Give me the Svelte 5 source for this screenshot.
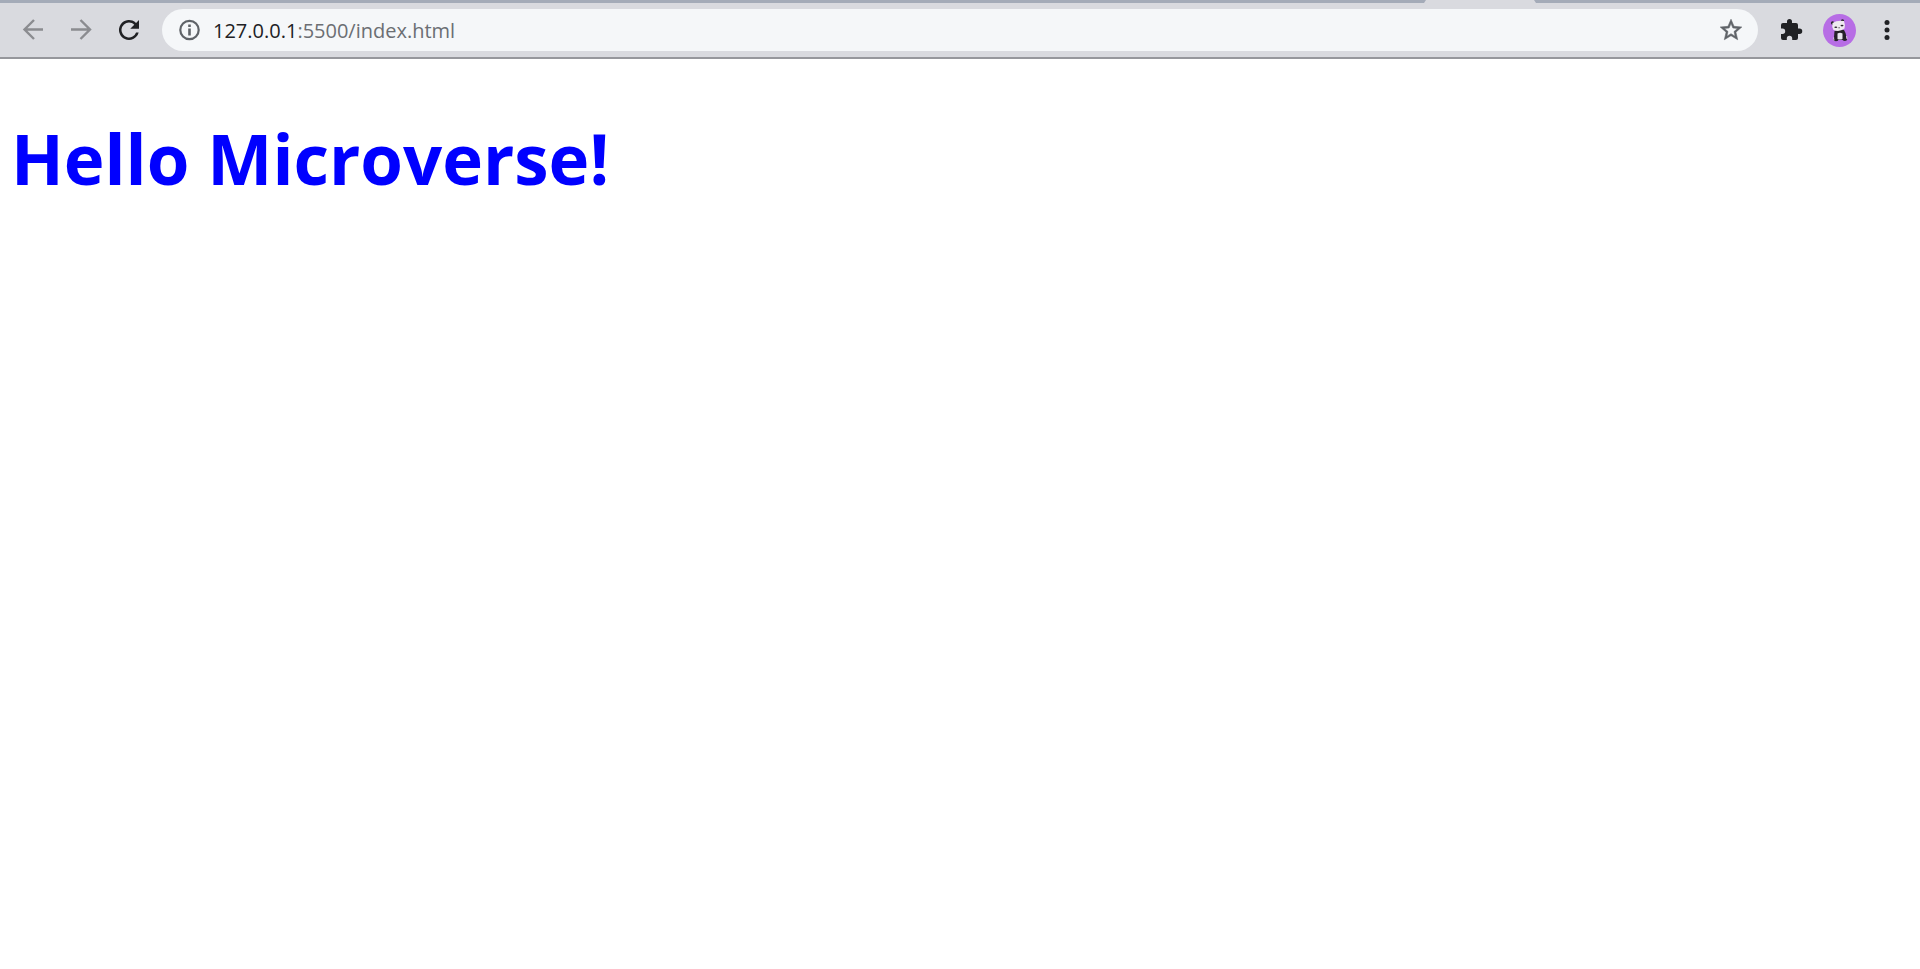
<script>
  let address = $state('127.0.0.1:5500/index.html');
  const split = $derived(address.indexOf(':') < 0 ? address.length : address.indexOf(':'));
</script>

<div class="tabs"><span class="tab"></span></div>
<header class="toolbar">
  <nav class="nav" aria-label="Navigation">
    <button type="button" aria-label="Back" disabled>
      <svg width="30" height="30" viewBox="0 0 30 30"><path d="M25 14.500H6.500M16 5L6.500 14.500 16 24" fill="none" stroke="currentColor" stroke-width="2.400" /></svg>
    </button>
    <button type="button" aria-label="Forward" disabled>
      <svg width="30" height="30" viewBox="0 0 30 30"><path d="M5 14.500h18.500M14.500 5l9.500 9.500-9.500 9.500" fill="none" stroke="currentColor" stroke-width="2.400" /></svg>
    </button>
    <button type="button" aria-label="Reload">
      <svg width="30" height="30" viewBox="0 0 24 24"><path d="M17.65 6.35A8 8 0 1 0 19.73 14h-2.08A6 6 0 1 1 12 6c1.66 0 3.14.69 4.22 1.78L13 11h7V4z" /></svg>
    </button>
  </nav>

  <div class="omnibox">
    <button type="button" class="info" aria-label="Site information">
      <svg width="24" height="24" viewBox="0 0 24 24"><circle cx="12.500" cy="12" r="9.200" fill="none" stroke="currentColor" stroke-width="2.200" /><path d="M11.200 6.500h2.600v2.400h-2.600zm0 4h2.600v7h-2.600z" /></svg>
    </button>
    <div class="address">
      <span aria-hidden="true"><span class="host">{address.slice(0, split)}</span>{address.slice(split)}</span>
      <input type="text" aria-label="Address" spellcheck="false" bind:value={address} />
    </div>
    <button type="button" class="star" aria-label="Bookmark this page">
      <svg width="26" height="26" viewBox="0 0 24 24"><path stroke="currentColor" stroke-width=".5" d="M22 9.24l-7.19-.62L12 2 9.19 8.63 2 9.24l5.46 4.73L5.82 21 12 17.27 18.18 21l-1.63-7.03L22 9.24zM12 15.4l-3.76 2.27 1-4.28-3.32-2.88 4.38-.38L12 6.1l1.71 4.04 4.38.38-3.32 2.88 1 4.28L12 15.4z" /></svg>
    </button>
  </div>

  <div class="actions">
    <button type="button" aria-label="Extensions">
      <svg width="24" height="24" viewBox="0 0 24 24"><path d="M20.500 10.500H19V7a2 2 0 0 0-2-2h-4V3.500a2.500 2.500 0 0 0-5 0V5H4a2 2 0 0 0-2 2v3.500h1.500a2.700 2.700 0 0 1 0 5.400H2V20a2 2 0 0 0 2 2h3.800v-1.500a2.700 2.700 0 0 1 5.400 0V22H17a2 2 0 0 0 2-2v-4h1.500a2.750 2.750 0 0 0 0-5.500z" /></svg>
    </button>
    <button type="button" aria-label="Profile">
      <svg width="33" height="33" viewBox="0 0 33 33">
        <circle cx="16.5" cy="16.5" r="16.5" fill="#b76de5" />
        <g fill="#252128">
          <circle cx="9.600" cy="9" r="1.700" /><circle cx="19.500" cy="7" r="1.700" />
          <path d="M11.500 17q5-2 9.500-1 2 3 2.500 7l-1.500 3H12.500L11 23z" />
          <ellipse cx="13" cy="25.300" rx="2.600" ry="2" /><ellipse cx="21.800" cy="25" rx="2.400" ry="2" />
        </g>
        <path d="M9.500 9Q14 6 21 7q1.500 4 .5 7.500-5 4-11 1.500Q8.500 13 9.500 9z" fill="#eeeaef" />
        <path d="M14.500 19.500q2.500-1.500 5 0v5.500q-2.500 1-5 0z" fill="#e8e4ee" />
        <g fill="#252128"><ellipse cx="12.800" cy="13.300" rx="1.500" ry=".8" /><ellipse cx="19" cy="11.600" rx="1.500" ry=".8" /><path d="M15 13.700l2-.4-.8 1.300z" /></g>
        <path d="M10.500 23.500l.5 3M23.500 22l.5 3" fill="none" stroke="#d8c4df" />
      </svg>
    </button>
    <button type="button" aria-label="Menu">
      <svg width="30" height="30" viewBox="0 0 24 24"><circle cx="12" cy="6" r="2" /><circle cx="12" cy="12" r="2" /><circle cx="12" cy="18" r="2" /></svg>
    </button>
  </div>
</header>
<main>
  <h1>Hello Microverse!</h1>
</main>

<style>
  :global(body) {
    margin: 0;
    background: #fff;
    font-family: "Open Sans", "Noto Sans", sans-serif;
  }
  .tabs {
    display: flex;
    justify-content: flex-end;
    height: 3px;
    padding-right: 384px;
    background: #a4abb8;
  }
  .tab {
    width: 112px;
    background: #d9dadf;
    clip-path: polygon(2px 0, 110px 0, 100% 100%, 0 100%);
  }
  .toolbar {
    display: flex;
    align-items: center;
    height: 54px;
    padding: 0 9px;
    border-bottom: 2px solid #96979c;
    background: #d9dadf;
  }
  button {
    display: flex;
    align-items: center;
    justify-content: center;
    width: 48px;
    height: 42px;
    padding: 0;
    border: 0;
    background: none;
    color: #202124;
  }
  button:disabled {
    color: #8b8c90;
  }
  svg {
    display: block;
    fill: currentColor;
  }
  .nav,
  .actions {
    display: flex;
  }
  .omnibox {
    display: flex;
    flex: 1;
    align-items: center;
    height: 42px;
    margin: 0 9px;
    border-radius: 21px;
    background: #f5f7f9;
  }
  .omnibox button {
    color: #5f6368;
  }
  .info {
    margin-left: 3px;
  }
  .star {
    margin-right: 3px;
  }
  .address {
    position: relative;
    flex: 1;
    padding-top: 2px;
    color: #6b6e73;
    font-size: 20px;
    line-height: 40px;
    white-space: pre;
  }
  .host {
    color: #202124;
  }
  .address input {
    position: absolute;
    inset: 0;
    width: 100%;
    padding: 2px 0 0;
    border: 0;
    outline: 0;
    background: none;
    color: transparent;
    caret-color: #202124;
    font: inherit;
  }
  main {
    padding: 45px 11px;
  }
  h1 {
    margin: 0;
    color: #00f;
    font-size: 69px;
    font-weight: 700;
    line-height: 108px;
  }
</style>
